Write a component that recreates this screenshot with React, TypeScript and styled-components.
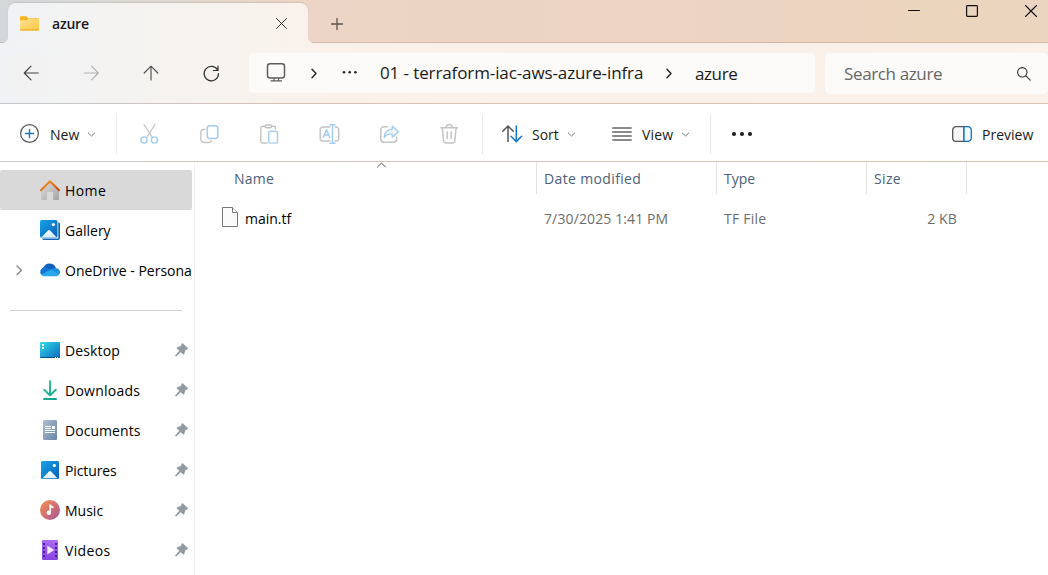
import React from "react";
import styled, { createGlobalStyle } from "styled-components";

const Global = createGlobalStyle`
  * { box-sizing: border-box; }
  body { margin: 0; background: #fff; overflow: hidden; }
  body, button { font-family: "Open Sans", "Noto Sans", sans-serif; }
  svg { display: block; flex: none; overflow: visible; fill: none; }
`;

const paper = "linear-gradient(90deg, #f0f2f5 0, #f4f3f2 110px, #f7f3ee 210px, #faf1eb 320px, #faf0ea 700px, #faf1ea 1048px)";

const Window = styled.div`
  width: 1048px;
  height: 575px;
  display: flex;
  flex-direction: column;
  overflow: hidden;
  background: #fff;
`;

const TitleBar = styled.header`
  height: 43px;
  flex: none;
  display: flex;
  align-items: flex-start;
  padding-left: 8px;
  background: linear-gradient(90deg, #d2d8d9 0, #d9dad7 110px, #e4d8cd 210px, #ecd5c6 310px, #edd4c4 640px, #ecd4c1 820px, #ecd5bd 930px, #ecd5c0 1048px);
  box-shadow: inset 0 -1px 0 rgba(150, 105, 75, 0.26);
`;

const Tab = styled.div`
  position: relative;
  width: 300px;
  height: 40px;
  margin-top: 3px;
  padding: 0 21px 0 12px;
  display: flex;
  align-items: center;
  border-radius: 8px 8px 0 0;
  background: ${paper} -8px 0 / 1048px 100% no-repeat;
  box-shadow: 0 -1px 1px rgba(120, 90, 70, 0.16);
  &::before,
  &::after {
    content: "";
    position: absolute;
    bottom: 0;
    width: 5px;
    height: 5px;
  }
  &::before {
    left: -5px;
    background: radial-gradient(circle at 0 0, transparent 4.5px, #f0f2f5 5px);
  }
  &::after {
    right: -5px;
    background: radial-gradient(circle at 100% 0, transparent 4.5px, #faf1eb 5px);
  }
`;

const CloseTab = styled.span`
  margin-left: auto;
`;

const NewTab = styled.div`
  margin: 18px 0 0 23px;
`;

const WindowControls = styled.div`
  margin-left: auto;
  display: grid;
  grid-template-columns: 58px 59px 12px;
  padding: 5px 11px 0 0;
`;

const NavBar = styled.nav`
  height: 61px;
  flex: none;
  display: flex;
  align-items: flex-start;
  padding: 10px 0 0 11px;
  background: ${paper};
  border-bottom: 1px solid;
  border-image: linear-gradient(90deg, #c5c8ca, #d6c3b7 300px, #dac5b3) 1;
`;

const NavButton = styled.div<{ $active?: boolean }>`
  width: 40px;
  height: 40px;
  margin-right: 20px;
  display: flex;
  align-items: center;
  justify-content: center;
  border-radius: 5px;
  background: ${(p) => (p.$active ? "#f2f2f2" : "transparent")};
`;

const AddressBox = styled.div`
  width: 566px;
  height: 40px;
  margin-left: -2px;
  padding-left: 17px;
  display: flex;
  align-items: center;
  border-radius: 5px;
  background: #fcfbf9;
`;

const SearchBox = styled.div`
  width: 223px;
  height: 41px;
  margin-left: 10px;
  padding: 0 17px 0 19px;
  display: flex;
  align-items: center;
  justify-content: space-between;
  border-radius: 5px;
  background: #fcfbf9;
`;

const Toolbar = styled.div`
  height: 58px;
  flex: none;
  display: flex;
  align-items: center;
  padding: 3px 15px 0 20px;
  border-bottom: 1px solid;
  border-image: linear-gradient(90deg, #c5c8ca, #d6c3b7 300px, #dac5b3) 1;
`;

const Divider = styled.span`
  width: 1px;
  height: 40px;
  background: #eaeaea;
`;

const Actions = styled.div`
  display: flex;
  gap: 40px;
  padding: 0 22px 0 23px;
`;

const Label = styled.span<{ $size?: number; $ls?: number; $color?: string; $weight?: number }>`
  font-size: ${(p) => p.$size ?? 14}px;
  letter-spacing: ${(p) => p.$ls ?? 0}px;
  color: ${(p) => p.$color ?? "#1a1a1a"};
  font-weight: ${(p) => p.$weight ?? 400};
  line-height: 20px;
  white-space: nowrap;
`;

/* Label of a tab, place or file: its line sits a little under the row's middle. */
const RowLabel = styled(Label)`
  padding-top: 2px;
`;

const Slot = styled.span<{ $w: number; $indent?: number; $end?: boolean }>`
  width: ${(p) => p.$w}px;
  padding-left: ${(p) => p.$indent ?? 0}px;
  margin-left: ${(p) => (p.$end ? "auto" : 0)};
  flex: none;
  display: flex;
  align-items: center;
`;

const Main = styled.div`
  flex: 1;
  min-height: 0;
  display: flex;
`;

const Sidebar = styled.aside`
  width: 195px;
  flex: none;
  padding: 8px 2px 0 0;
  border-right: 1px solid #f3f3f3;
  overflow: hidden;
`;

const SideItem = styled.div<{ $selected?: boolean }>`
  width: 192px;
  height: 40px;
  padding-right: 4px;
  display: flex;
  align-items: center;
  border-radius: 2px;
  overflow: hidden;
  background: ${(p) => (p.$selected ? "#d9d9d9" : "transparent")};
`;

const Expander = styled.span`
  width: 40px;
  flex: none;
  padding-left: 16px;
`;

const ItemIcon = styled.span`
  width: 25px;
  flex: none;
`;

const PinSlot = styled.span`
  margin-left: auto;
`;

const Separator = styled.div`
  height: 40px;
  padding: 20px 12px 0 10px;
  &::after {
    content: "";
    display: block;
    height: 1px;
    width: 172px;
    background: #d2d2d2;
  }
`;

const FileArea = styled.main`
  flex: 1;
`;

const HeaderRow = styled.div`
  position: relative;
  height: 32px;
  padding-left: 31px;
  display: flex;
`;

const HeaderCell = styled.div<{ $w: number; $pad: number }>`
  width: ${(p) => p.$w}px;
  padding: 1px 0 0 ${(p) => p.$pad}px;
  display: flex;
  align-items: center;
  border-right: 1px solid #e3e3e3;
`;

const SortMark = styled.span`
  position: absolute;
  left: 182px;
  top: 0;
`;

const FileRow = styled.div`
  height: 40px;
  margin-top: 4px;
  padding-left: 27px;
  display: flex;
  align-items: center;
`;

const FileCell = styled.div<{ $w: number; $right?: boolean }>`
  width: ${(p) => p.$w}px;
  display: flex;
  align-items: center;
  justify-content: ${(p) => (p.$right ? "flex-end" : "flex-start")};
`;

const FileIconSlot = styled.span`
  width: 23px;
  padding-bottom: 2px;
`;

type IconProps = { w?: number; h?: number; children: React.ReactNode; stroke?: string; sw?: number };
const Icon = ({ w = 20, h = 20, children, stroke = "#555", sw = 1.2 }: IconProps) => (
  <svg width={w} height={h} viewBox={`0 0 ${w} ${h}`} stroke={stroke} strokeWidth={sw} strokeLinecap="round" strokeLinejoin="round">
    {children}
  </svg>
);

const ChevronDown = () => (
  <Icon w={7} h={5} stroke="#777" sw={1}><path d="M.3 1l3.200 3 3.200-3" /></Icon>
);
const ChevronRight = () => (
  <Icon w={6} h={10} stroke="#222" sw={1.4}><path d="M1 1.300L5 5.500 1 9.700" /></Icon>
);

const GREY = "#c4c4c4";
const BLUE = "#a3cdf0";

const CutIcon = () => (
  <Icon stroke={GREY}>
    <path d="M4 .7l8 12.2M15 .7L7 12.9" />
    <g stroke={BLUE} strokeWidth={1.4}><circle cx="4" cy="16" r="3.1" /><circle cx="14.5" cy="16" r="3.1" /></g>
  </Icon>
);
const CopyIcon = () => (
  <Icon stroke={GREY} sw={1.3}>
    <path d="M5 5.500H3.500a2.700 2.700 0 0 0-2.700 2.700v7a3.300 3.300 0 0 0 3.300 3.300h4.500a2.800 2.800 0 0 0 2.700-2" />
    <rect x="7.300" y="1.700" width="10.400" height="12.800" rx="2.500" stroke={BLUE} strokeWidth={1.5} />
  </Icon>
);
const PasteIcon = () => (
  <Icon stroke={GREY} sw={1.4}>
    <path d="M5 2.300H2.400A1.600 1.600 0 0 0 .8 3.900v13.500A1.600 1.600 0 0 0 2.400 19H7M11.500 2.300H14a1.600 1.600 0 0 1 1.600 1.600v1" />
    <rect x="5" y="1" width="6.600" height="2.800" rx="1.400" />
    <rect x="8.700" y="7.300" width="8.800" height="11.800" rx="1.600" stroke={BLUE} />
  </Icon>
);
const RenameIcon = () => (
  <Icon stroke={GREY} sw={1.5}>
    <path d="M10 3H2.800A2.600 2.600 0 0 0 .2 5.600v8.800A2.600 2.600 0 0 0 2.800 17H10M15 3h1A2.600 2.600 0 0 1 18.700 5.600v8.800A2.600 2.600 0 0 1 16 17h-1" />
    <path d="M12.500 1v18M10 .8h5M10 19.200h5M3.200 13.500l3.300-7.800 3.300 7.800M4.400 10.900h4.200" stroke={BLUE} />
  </Icon>
);
const ShareIcon = () => (
  <Icon stroke={GREY} sw={1.5}>
    <path d="M7.500 2.800H4A3.200 3.200 0 0 0 .8 6v9A3.200 3.200 0 0 0 4 18.200h9.500a3.200 3.200 0 0 0 3.200-3.200v-1.500" />
    <path d="M12.200 2l6.300 5.700-6.300 5.500v-3.400c-4 0-6.500 1.200-8 3.700.3-5 3-7.800 8-8.300z" stroke={BLUE} strokeWidth={1.3} fill="#eef7fd" />
  </Icon>
);
const TrashIcon = () => (
  <Icon stroke={GREY} sw={1.5}>
    <path d="M.8 3.800h16.700M6.200 3.600a3 3 0 0 1 6 0M2.300 4l1.300 13a2.200 2.200 0 0 0 2.200 2h6.800a2.200 2.200 0 0 0 2.200-2L16.100 4M7.300 8v6.500M11.100 8v6.500" />
  </Icon>
);

const Pin = () => (
  <svg width="13" height="14" viewBox="0 0 13 14">
    <path d="M6.600 1c.4-.8 1.200-.8 1.700-.3l4.300 4.100c.5.600.3 1.300-.4 1.600L10.200 7.500l-.8 3.300c-.2.800-1.100 1-1.600.5L5.700 9.200 1.300 13.200H.3v-1L4.300 7.800 2 5.600c-.5-.5-.3-1.400.6-1.600l3-.7z" fill="#919ba1" />
  </svg>
);

const HomeIcon = () => (
  <svg width="20" height="20" viewBox="0 0 20 20">
    <defs>
      <linearGradient id="hr" x1="0" y1="0" x2="1" y2="1"><stop stopColor="#f7a31c" /><stop offset="1" stopColor="#d4400d" /></linearGradient>
      <linearGradient id="hw" x1="0" y1="0" x2="1" y2="1"><stop stopColor="#dedede" /><stop offset="1" stopColor="#a5a5a5" /></linearGradient>
    </defs>
    <path d="M1 9l9-8 9 8v10a1 1 0 0 1-1 1h-5v-8H7v8H2a1 1 0 0 1-1-1z" fill="url(#hw)" />
    <path d="M1 10.300L10 1.200l9 9.100" stroke="url(#hr)" strokeWidth="2" strokeLinecap="round" strokeLinejoin="round" />
  </svg>
);
const Photo = ({ s = 18 }: { s?: number }) => (
  <>
    <defs>
      <linearGradient id="ph" x1="0" y1="0" x2="1" y2="1"><stop stopColor="#19a2e8" /><stop offset="1" stopColor="#0560b8" /></linearGradient>
      <linearGradient id="mt" x1="0" y1="0" x2="0" y2="1"><stop stopColor="#fff" /><stop offset="1" stopColor="#d5effd" /></linearGradient>
    </defs>
    <rect width={s} height={s} rx="1.500" fill="url(#ph)" />
    <path d="M1.500 17.300L8 10.400c.7-.7 1.300-.7 2 0l6.500 6.900z" fill="url(#mt)" />
    <circle cx="13.300" cy="4.600" r="1.600" fill="#fff" />
  </>
);
const GalleryIcon = () => (
  <svg width="20" height="20" viewBox="0 0 20 20">
    <path d="M18.300 2.500h.5q1.200.3 1.200 1.500v14a2 2 0 0 1-2 2H4q-1.500 0-1.800-1.500H18.300z" fill="#0b63b5" />
    <Photo s={17.5} />
  </svg>
);
const PicturesIcon = () => (
  <svg width="20" height="20" viewBox="-1 -1 20 20"><Photo /></svg>
);
const CloudIcon = () => (
  <svg width="20" height="20" viewBox="0 0 20 20">
    <path d="M3.500 7.500A6.700 6.700 0 0 1 16 8.200l-4 4.300-8 2.500A4 4 0 0 1 3.500 7.500z" fill="#0f5fbd" />
    <path d="M4.500 7.500c2.500 0 4 .7 6.200 2.100L1.600 14.900A4.300 4.300 0 0 1 4.500 7.500z" fill="#0f74d3" />
    <path d="M10.500 9.500c2-1.300 3.700-1.500 5.600-1.300A3.900 3.900 0 0 1 20 12.200a4 4 0 0 1-1.400 2.800z" fill="#1490df" />
    <path d="M1.300 14.700L10.500 9.500l8.300 5.300q-1.100 1.500-3 1.500H4.500Q2.500 16.300 1.300 14.700z" fill="#28a8ea" />
  </svg>
);
const DesktopIcon = () => (
  <svg width="20" height="20" viewBox="0 0 20 20">
    <defs><linearGradient id="dk" x1="0" y1="0" x2="1" y2="1"><stop stopColor="#35dbe6" /><stop offset="1" stopColor="#0969c4" /></linearGradient></defs>
    <rect y="2" width="20" height="16" rx="1.200" fill="url(#dk)" />
    <path d="M0 17h20q-.2 1-1.200 1H1.200Q.2 18 0 17z" fill="#09508f" />
    <path d="M2 4h2v2H2zM2 7h2v2H2zM15 17h1v1h-1zM17 17h1v1h-1z" fill="#f2fdff" />
  </svg>
);
const DownloadsIcon = () => (
  <svg width="20" height="20" viewBox="0 0 20 20">
    <defs><linearGradient id="dl" gradientUnits="userSpaceOnUse" x1="3" y1="0" x2="16" y2="19"><stop stopColor="#3bcf8a" /><stop offset="1" stopColor="#0b9f95" /></linearGradient></defs>
    <path d="M10 1v14M4.200 9.700L10 15.400l5.800-5.700M4 19h12" stroke="url(#dl)" strokeWidth="2" strokeLinecap="round" strokeLinejoin="round" />
  </svg>
);
const DocumentsIcon = () => (
  <svg width="20" height="20" viewBox="0 0 20 20">
    <defs><linearGradient id="dc" x1="0" y1="0" x2="1" y2="1"><stop stopColor="#aebfd2" /><stop offset="1" stopColor="#6585a6" /></linearGradient></defs>
    <rect x="3" width="14" height="20" rx="1.300" fill="url(#dc)" />
    <path d="M5 6h6v1H5zM5 8h6v1H5zM5 10h10v1H5zM12 6h3v3h-3zM5 12h10v1H5z" fill="#fff" />
  </svg>
);
const MusicIcon = () => (
  <svg width="20" height="20" viewBox="0 0 20 20">
    <defs><linearGradient id="mu" x1="0" y1="0" x2="1" y2="1"><stop stopColor="#f19255" /><stop offset=".5" stopColor="#d4716f" /><stop offset="1" stopColor="#9d569f" /></linearGradient></defs>
    <circle cx="10" cy="10" r="10" fill="url(#mu)" />
    <circle cx="8.800" cy="12.700" r="2.200" fill="#fff" />
    <path d="M9.500 4.300l1.500.2c.3 1.300 1 1.700 2.500 1.900v1.900q-1.500 0-2.500-.8v5.200H9.500z" fill="#fff" />
  </svg>
);
const VideosIcon = () => (
  <svg width="20" height="20" viewBox="0 0 20 20">
    <defs><linearGradient id="vd" x1="0" y1="0" x2="0" y2="1"><stop stopColor="#ad6af2" /><stop offset="1" stopColor="#8745df" /></linearGradient></defs>
    <rect x="2" width="16" height="20" rx="1.200" fill="url(#vd)" />
    {[3, 7, 11, 15].map((y) => (
      <path key={y} d={`M3 ${y}h2v2H3zM15 ${y}h2v2h-2z`} fill="#45209a" />
    ))}
    <path d="M7.300 6.300q0-.8.700-.4l5.500 3.600q.5.500 0 1L8 14.100q-.7.400-.7-.4z" fill="#f3e9fd" />
  </svg>
);

const places: { name: string; icon: React.ReactNode; ls: number }[] = [
  { name: "Desktop", icon: <DesktopIcon />, ls: 0.12 },
  { name: "Downloads", icon: <DownloadsIcon />, ls: 0.25 },
  { name: "Documents", icon: <DocumentsIcon />, ls: 0.05 },
  { name: "Pictures", icon: <PicturesIcon />, ls: -0.12 },
  { name: "Music", icon: <MusicIcon />, ls: 0 },
  { name: "Videos", icon: <VideosIcon />, ls: 0.35 },
];

const HEAD = "#4c607a";
const MUTED = "#6d6d6d";

export default function App() {
  return (
    <Window>
      <Global />
      <TitleBar>
        <Tab>
          <Slot $w={32}>
            <svg width="19" height="15" viewBox="0 0 19 15">
              <defs><linearGradient id="fd" x1="0" y1="0" x2="1" y2="1"><stop stopColor="#ffe29a" /><stop offset="1" stopColor="#fcc73c" /></linearGradient></defs>
              <path d="M0 1.300Q0 .3 1 .3h5.300l2 2H18q1 0 1 1V8H0z" fill="#f5b51b" />
              <path d="M0 4.300h6.500l2-1.500H18q1 0 1 1V13.500q0 1-1 1H1q-1 0-1-1z" fill="url(#fd)" />
              <path d="M0 13.600h19q0 1-1 1H1q-1 0-1-1z" fill="#e8a51c" />
            </svg>
          </Slot>
          <RowLabel $weight={600} $ls={-0.2}>azure</RowLabel>
          <CloseTab>
            <Icon w={11} h={11} stroke="#333" sw={1}><path d="M.5.5l10 10M10.500.5l-10 10" /></Icon>
          </CloseTab>
        </Tab>
        <NewTab>
          <Icon w={12} h={12} stroke="#5c544f" sw={1.3}><path d="M6 .5v11M.5 6h11" /></Icon>
        </NewTab>
        <WindowControls>
          <Icon w={12} h={12} stroke="#111" sw={1}><path d="M.5 5.500h11" /></Icon>
          <Icon w={12} h={12} stroke="#111" sw={1.2}><rect x=".6" y=".6" width="10.800" height="10.800" rx=".8" /></Icon>
          <Icon w={12} h={12} stroke="#111" sw={1.1}><path d="M.5.5l11 11M11.500.5l-11 11" /></Icon>
        </WindowControls>
      </TitleBar>

      <NavBar>
        <NavButton $active>
          <Icon w={16} h={16} stroke="#444"><path d="M15.300 8H1.500M8 1.200L1.300 8 8 14.800" /></Icon>
        </NavButton>
        <NavButton>
          <Icon w={16} h={16} stroke="#b5b3b1"><path d="M1.300 8H15M8.600 1.200L15.300 8l-6.700 6.800" /></Icon>
        </NavButton>
        <NavButton>
          <Icon w={16} h={16} stroke="#555"><path d="M8 15V1.300M1.200 8L8 1.200 14.800 8" /></Icon>
        </NavButton>
        <NavButton>
          <Icon w={16} h={16} stroke="#333"><path d="M14.700 5.300a7.200 7.200 0 1 0 .8 3.200M15 1v4.500h-4.500" /></Icon>
        </NavButton>
        <AddressBox>
          <Slot $w={45}>
            <Icon stroke="#5c5c5c" sw={1.5}>
              <rect x="1.500" y=".8" width="17" height="14.200" rx="2.500" />
              <path d="M8 15v2.800M12.500 15v2.800M5 17.900h10.500" strokeWidth={1.2} />
            </Icon>
          </Slot>
          <Slot $w={31}><ChevronRight /></Slot>
          <Slot $w={38}>
            <svg width="16" height="4" viewBox="0 0 16 4"><g fill="#222"><circle cx="2" cy="1.300" r="1.300" /><circle cx="7.700" cy="1.300" r="1.300" /><circle cx="13.400" cy="1.300" r="1.300" /></g></svg>
          </Slot>
          <Slot $w={286}><Label $size={17} $ls={-0.11}>01 - terraform-iac-aws-azure-infra</Label></Slot>
          <Slot $w={29}><ChevronRight /></Slot>
          <RowLabel $size={17} $ls={-0.4}>azure</RowLabel>
        </AddressBox>
        <SearchBox>
          <Label $size={17} $color="#666" $ls={-0.37}>Search azure</Label>
          <Icon w={14} h={14} stroke="#333" sw={1.1}><circle cx="5.300" cy="5.300" r="4.700" /><path d="M8.900 8.900l4.300 4.300" /></Icon>
        </SearchBox>
      </NavBar>

      <Toolbar>
        <Slot $w={30}>
          <Icon stroke="#555"><circle cx="9.500" cy="9.500" r="8.900" /><path d="M9.500 5.500v8M5.500 9.500h8" stroke="#1976c5" strokeWidth="1.400" /></Icon>
        </Slot>
        <Slot $w={38}><RowLabel>New</RowLabel></Slot>
        <Slot $w={28}><ChevronDown /></Slot>
        <Divider />
        <Actions>
          <CutIcon /><CopyIcon /><PasteIcon /><RenameIcon /><ShareIcon /><TrashIcon />
        </Actions>
        <Divider />
        <Slot $w={49} $indent={19}>
          <Icon stroke="#555" sw={1.5}>
            <path d="M6 17.500V2M.8 7.300L6 2l5.200 5.300" /><path d="M14.300 2v15.500M9 12.300l5.300 5.300 5.300-5.300" stroke="#0f78d4" />
          </Icon>
        </Slot>
        <Slot $w={36}><RowLabel>Sort</RowLabel></Slot>
        <Slot $w={44}><ChevronDown /></Slot>
        <Slot $w={30}>
          <Icon stroke="#666" sw={1.3}><path d="M.7 4h18.600M.7 8h18.600M.7 12h18.600M.7 16h18.600" /></Icon>
        </Slot>
        <Slot $w={40}><RowLabel $ls={0.2}>View</RowLabel></Slot>
        <Slot $w={28}><ChevronDown /></Slot>
        <Divider />
        <Slot $w={42} $indent={21}>
          <svg width="20" height="4" viewBox="0 0 20 4"><g fill="#1a1a1a"><circle cx="2" cy="2" r="2" /><circle cx="10" cy="2" r="2" /><circle cx="18" cy="2" r="2" /></g></svg>
        </Slot>
        <Slot $w={81} $end>
          <Slot $w={30}>
            <Icon sw={1.3}>
              <path d="M12 2.700H4A3.300 3.300 0 0 0 .7 6v8A3.300 3.300 0 0 0 4 17.300h8z" fill="#f7f7f7" />
              <path d="M12 2.700h4A3.300 3.300 0 0 1 19.300 6v8a3.300 3.300 0 0 1-3.300 3.300h-4z" stroke="#0f6fc0" fill="#f1f8fd" />
            </Icon>
          </Slot>
          <RowLabel>Preview</RowLabel>
        </Slot>
      </Toolbar>

      <Main>
        <Sidebar>
          <SideItem $selected><Expander /><ItemIcon><HomeIcon /></ItemIcon><RowLabel $color="#000" $ls={0.4}>Home</RowLabel></SideItem>
          <SideItem><Expander /><ItemIcon><GalleryIcon /></ItemIcon><RowLabel $color="#000">Gallery</RowLabel></SideItem>
          <SideItem>
            <Expander><Icon w={7} h={10} stroke="#888" sw={1.4}><path d="M1 1L5.500 5.200 1 9.500" /></Icon></Expander>
            <ItemIcon><CloudIcon /></ItemIcon>
            <RowLabel $color="#000">OneDrive - Persona</RowLabel>
          </SideItem>
          <Separator />
          {places.map((p) => (
            <SideItem key={p.name}>
              <Expander />
              <ItemIcon>{p.icon}</ItemIcon>
              <RowLabel $color="#000" $ls={p.ls}>{p.name}</RowLabel>
              <PinSlot><Pin /></PinSlot>
            </SideItem>
          ))}
        </Sidebar>
        <FileArea>
          <HeaderRow>
            <SortMark><Icon w={9} h={6} stroke="#555" sw={1}><path d="M.5 5l4-4 4 4" /></Icon></SortMark>
            <HeaderCell $w={311} $pad={8}><Label $color={HEAD} $ls={0.25}>Name</Label></HeaderCell>
            <HeaderCell $w={180} $pad={7}><Label $color={HEAD} $ls={0.36}>Date modified</Label></HeaderCell>
            <HeaderCell $w={150} $pad={7}><Label $color={HEAD}>Type</Label></HeaderCell>
            <HeaderCell $w={100} $pad={7}><Label $color={HEAD} $ls={0.35}>Size</Label></HeaderCell>
          </HeaderRow>
          <FileRow>
            <FileCell $w={322}>
              <FileIconSlot>
                <svg width="16" height="20" viewBox="0 0 16 20" stroke="#777"><path d="M.5.500h10l5 5v14H.5z" fill="#fafafa" /><path d="M10.500.5v5h5" fill="#fff" /></svg>
              </FileIconSlot>
              <RowLabel $color="#000">main.tf</RowLabel>
            </FileCell>
            <FileCell $w={180}><RowLabel $color={MUTED} $ls={0.12}>7/30/2025 1:41 PM</RowLabel></FileCell>
            <FileCell $w={150}><RowLabel $color={MUTED} $ls={0.25}>TF File</RowLabel></FileCell>
            <FileCell $w={83} $right><RowLabel $color={MUTED} $ls={0.15}>2 KB</RowLabel></FileCell>
          </FileRow>
        </FileArea>
      </Main>
    </Window>
  );
}
